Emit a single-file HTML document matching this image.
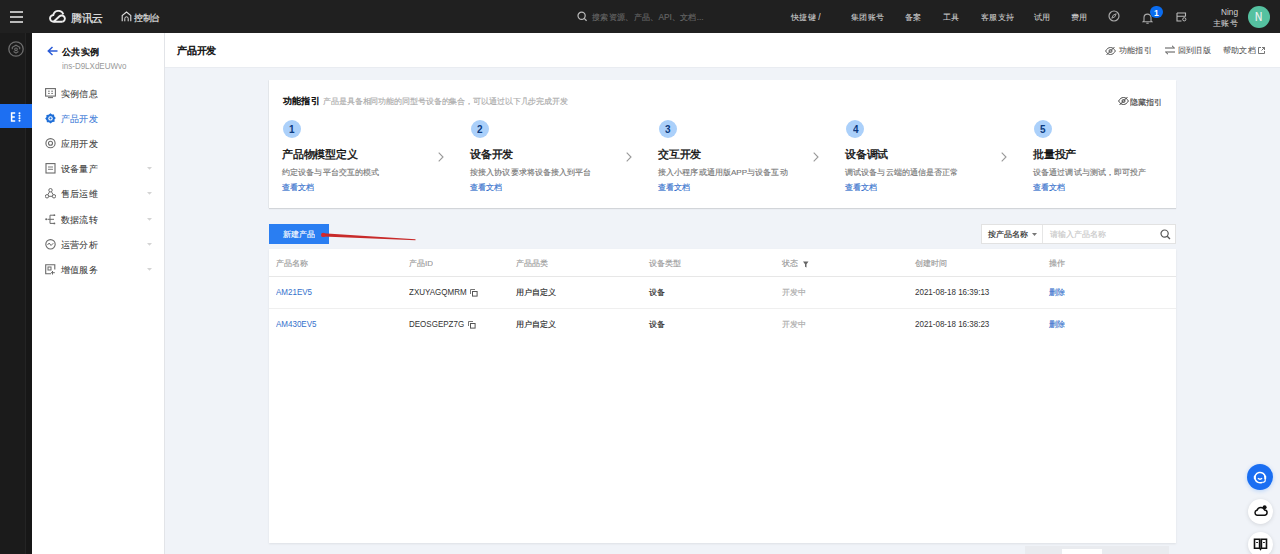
<!DOCTYPE html>
<html><head><meta charset="utf-8">
<style>
*{box-sizing:border-box;margin:0;padding:0}
html,body{width:1280px;height:554px;overflow:hidden}
body{font-family:"Liberation Sans",sans-serif;background:#f0f3f8;position:relative}
.abs{position:absolute}
.t{position:absolute;white-space:nowrap;line-height:20px;height:20px;font-size:20.0px;transform-origin:0 50%;-webkit-text-stroke:0.35px currentColor}
</style></head><body>
<div class="abs" style="left:0px;top:0px;width:1280px;height:33px;background:#202020"></div>
<div class="abs" style="left:0px;top:33px;width:32px;height:521px;background:#1b1b1b"></div>
<div class="abs" style="left:25px;top:33px;width:1px;height:521px;background:#242424"></div>
<div class="abs" style="left:26px;top:33px;width:6px;height:521px;background:#171717"></div>
<div class="abs" style="left:32px;top:33px;width:132px;height:521px;background:#fff"></div>
<div class="abs" style="left:164px;top:33px;width:1px;height:521px;background:#e2e4e8"></div>
<div class="abs" style="left:165px;top:33px;width:1115px;height:34px;background:#fff"></div>
<div class="abs" style="left:165px;top:67px;width:1115px;height:1px;background:#e9ecf1"></div>
<svg class="abs" style="left:10px;top:11px" width="14" height="12" viewBox="0 0 14 12"><g stroke="#eee" stroke-width="1.5"><line x1="0" y1="1" x2="13" y2="1"/><line x1="0" y1="6" x2="13" y2="6"/><line x1="0" y1="11" x2="13" y2="11"/></g></svg>
<svg class="abs" style="left:49px;top:10px" width="19" height="13" viewBox="0 0 19 13"><path d="M13.2 11.8H4.6A3.4 3.4 0 0 1 4.3 5A5.2 5.2 0 0 1 14.3 4.4" fill="none" stroke="#eee" stroke-width="1.9"/><path d="M4.6 11.8L10.5 6.3A3.2 3.2 0 1 1 13.2 11.8" fill="none" stroke="#eee" stroke-width="1.9"/></svg>
<span class="t" style="left:70.50px;top:7.50px;transform:scale(0.5250,0.5250);color:#eee;">腾讯云</span>
<svg class="abs" style="left:121px;top:11px" width="11" height="11" viewBox="0 0 11 11"><path d="M1.2 10.3V4.6L5.5 1L9.8 4.6V10.3" fill="none" stroke="#ddd" stroke-width="1.1"/><path d="M3.8 10.3V7.5A1.7 1.7 0 0 1 7.2 7.5V10.3" fill="none" stroke="#ddd" stroke-width="1"/></svg>
<span class="t" style="left:134.00px;top:7.50px;transform:scale(0.4250,0.4250);color:#e6e6e6;">控制台</span>
<svg class="abs" style="left:577px;top:11px" width="11" height="11" viewBox="0 0 11 11"><circle cx="4.6" cy="4.8" r="3.6" fill="none" stroke="#bbb" stroke-width="1.2"/><line x1="7.2" y1="7.4" x2="9.6" y2="9.8" stroke="#bbb" stroke-width="1.3"/></svg>
<span class="t" style="left:592.00px;top:7.00px;transform:scale(0.4150,0.4150);color:#666;">搜索资源、产品、API、文档...</span>
<span class="t" style="left:790.50px;top:7.00px;transform:scale(0.4150,0.4150);color:#d2d2d2;-webkit-text-stroke:0.15px currentColor;">快捷键 /</span>
<span class="t" style="left:851.40px;top:7.00px;transform:scale(0.4150,0.4150);color:#d2d2d2;-webkit-text-stroke:0.15px currentColor;">集团账号</span>
<span class="t" style="left:905.00px;top:7.00px;transform:scale(0.4150,0.4150);color:#d2d2d2;-webkit-text-stroke:0.15px currentColor;">备案</span>
<span class="t" style="left:943.00px;top:7.00px;transform:scale(0.4150,0.4150);color:#d2d2d2;-webkit-text-stroke:0.15px currentColor;">工具</span>
<span class="t" style="left:980.60px;top:7.00px;transform:scale(0.4150,0.4150);color:#d2d2d2;-webkit-text-stroke:0.15px currentColor;">客服支持</span>
<span class="t" style="left:1033.50px;top:7.00px;transform:scale(0.4150,0.4150);color:#d2d2d2;-webkit-text-stroke:0.15px currentColor;">试用</span>
<span class="t" style="left:1071.00px;top:7.00px;transform:scale(0.4150,0.4150);color:#d2d2d2;-webkit-text-stroke:0.15px currentColor;">费用</span>
<svg class="abs" style="left:1108px;top:10px" width="12" height="12" viewBox="0 0 12 12"><circle cx="6" cy="6" r="5" fill="none" stroke="#aaa" stroke-width="1.2"/><path d="M8.2 3.8L6.8 6.8L3.8 8.2L5.2 5.2Z" fill="none" stroke="#aaa" stroke-width="1"/></svg>
<svg class="abs" style="left:1142px;top:11.5px" width="11" height="12" viewBox="0 0 11 12"><path d="M2 8.8V5.6A3.5 3.5 0 0 1 9 5.6V8.8L10 9.8H1Z" fill="none" stroke="#aaa" stroke-width="1.1"/><path d="M4.3 11.2H6.7" stroke="#aaa" stroke-width="1.1"/></svg>
<div class="abs" style="left:1150px;top:5.7px;width:12.6px;height:12.6px;border-radius:50%;background:#0a6cf0"></div>
<span class="t" style="left:1154.00px;top:2.80px;transform:scale(0.4250,0.4250);color:#fff;font-weight:bold;-webkit-text-stroke:0;">1</span>
<svg class="abs" style="left:1176px;top:12px" width="11" height="10" viewBox="0 0 11 10"><path d="M1 1H9.5V4.5M1 1V9H5.5M1 4.2H9.5" fill="none" stroke="#bbb" stroke-width="1.1"/><circle cx="8.3" cy="7.3" r="1.6" fill="none" stroke="#bbb" stroke-width="1"/></svg>
<span class="t" style="left:1221.00px;top:2.20px;transform:scale(0.4150,0.4980);color:#d2d2d2;-webkit-text-stroke:0;">Ning</span>
<span class="t" style="left:1212.50px;top:12.50px;transform:scale(0.4150,0.4150);color:#d2d2d2;-webkit-text-stroke:0.15px currentColor;">主账号</span>
<div class="abs" style="left:1247.6px;top:5.5px;width:22px;height:22px;border-radius:50%;background:#55c1a0"></div>
<span class="t" style="left:1255.00px;top:6.80px;transform:scale(0.5000,0.6000);color:#f4f4f4;-webkit-text-stroke:0.3px currentColor;">N</span>
<svg class="abs" style="left:8px;top:41px" width="16" height="16" viewBox="0 0 16 16"><circle cx="8" cy="8" r="7.2" fill="none" stroke="#6e6e6e" stroke-width="1.3"/><path d="M4.3 8.2V6.3L8 4.2L11.7 6.3V8.2" fill="none" stroke="#6e6e6e" stroke-width="1.2"/><path d="M5.6 10.5L8 12.2L10.4 10.5" fill="none" stroke="#6e6e6e" stroke-width="1.1"/><circle cx="8" cy="8.3" r="1.3" fill="none" stroke="#6e6e6e" stroke-width="1.1"/></svg>
<div class="abs" style="left:0px;top:104px;width:32px;height:24px;background:#1d6ff2"></div>
<svg class="abs" style="left:10px;top:112px" width="12" height="10" viewBox="0 0 12 10"><g stroke="#fff" stroke-width="1.5" fill="none"><path d="M5.2 1H1.6V9H5.2M1.6 5H4.8"/></g><circle cx="9.5" cy="1.3" r="1" fill="#fff"/><circle cx="9.5" cy="3.8" r="1" fill="#fff"/><circle cx="9.5" cy="6.3" r="1" fill="#fff"/><circle cx="9.5" cy="8.8" r="1" fill="#fff"/></svg>
<svg class="abs" style="left:47px;top:46px" width="11" height="10" viewBox="0 0 11 10"><path d="M10.5 5H1.5M5.5 1L1.3 5L5.5 9" fill="none" stroke="#2a5bd7" stroke-width="1.5"/></svg>
<span class="t" style="left:62.00px;top:41.80px;transform:scale(0.4650,0.4650);color:#111;-webkit-text-stroke:1.0px currentColor;">公共实例</span>
<span class="t" style="left:62.00px;top:55.80px;transform:scale(0.4000,0.4800);color:#999;-webkit-text-stroke:0;">ins-D9LXdEUWvo</span>
<svg class="abs" style="left:45px;top:87.7px" width="11" height="11" viewBox="0 0 11 11"><rect x="0.6" y="0.6" width="9.8" height="7.5" fill="none" stroke="#6a6a6a" stroke-width="1.1"/><path d="M3 9.6H8" stroke="#6a6a6a" stroke-width="1.1"/><path d="M3 3.2H4.8M6.2 3.2H8M3 5.4H4.8M6.2 5.4H8" stroke="#6a6a6a" stroke-width="0.9"/></svg>
<span class="t" style="left:61.40px;top:83.70px;transform:scale(0.4600,0.4600);color:#3a3a3a;-webkit-text-stroke:0.15px currentColor;">实例信息</span>
<svg class="abs" style="left:45px;top:112.5px" width="11" height="11" viewBox="0 0 11 11"><path d="M5.5 0.3L7 1.6L9 1.5L9.3 3.5L10.8 5L9.5 6.6L9.6 8.7L7.5 9L5.5 10.5L4 9.2L1.9 9.3L1.6 7.3L0.2 5.6L1.5 4.1L1.4 2L3.5 1.7Z" fill="#1f6fd8"/><circle cx="5.5" cy="5.4" r="2.2" fill="#fff"/><circle cx="5.5" cy="5.4" r="1.1" fill="#1f6fd8"/></svg>
<span class="t" style="left:61.40px;top:108.50px;transform:scale(0.4600,0.4600);color:#3d7bd8;-webkit-text-stroke:0.15px currentColor;">产品开发</span>
<svg class="abs" style="left:45px;top:137.5px" width="11" height="11" viewBox="0 0 11 11"><circle cx="5.5" cy="5.2" r="4.6" fill="none" stroke="#6a6a6a" stroke-width="1.1"/><circle cx="5.5" cy="5.2" r="2" fill="none" stroke="#6a6a6a" stroke-width="1.1"/></svg>
<span class="t" style="left:61.40px;top:133.50px;transform:scale(0.4600,0.4600);color:#3a3a3a;-webkit-text-stroke:0.15px currentColor;">应用开发</span>
<svg class="abs" style="left:45px;top:163.0px" width="11" height="11" viewBox="0 0 11 11"><rect x="1" y="0.6" width="9" height="9.4" fill="none" stroke="#6a6a6a" stroke-width="1.1"/><path d="M3 4H8M3 6.3H8" stroke="#6a6a6a" stroke-width="0.9"/></svg>
<span class="t" style="left:61.40px;top:159.00px;transform:scale(0.4600,0.4600);color:#3a3a3a;-webkit-text-stroke:0.15px currentColor;">设备量产</span>
<svg class="abs" style="left:147px;top:167.0px" width="5" height="3" viewBox="0 0 5 3"><path d="M0 0H5L2.5 2.8Z" fill="#d4d4d4"/></svg>
<svg class="abs" style="left:45px;top:188.3px" width="11" height="11" viewBox="0 0 11 11"><circle cx="5.5" cy="2.2" r="1.7" fill="none" stroke="#6a6a6a" stroke-width="1"/><circle cx="2" cy="8.3" r="1.7" fill="none" stroke="#6a6a6a" stroke-width="1"/><circle cx="9" cy="8.3" r="1.7" fill="none" stroke="#6a6a6a" stroke-width="1"/><path d="M4.6 3.7L2.8 6.8M6.4 3.7L8.2 6.8M3.7 8.3H7.3" stroke="#6a6a6a" stroke-width="1"/></svg>
<span class="t" style="left:61.40px;top:184.30px;transform:scale(0.4600,0.4600);color:#3a3a3a;-webkit-text-stroke:0.15px currentColor;">售后运维</span>
<svg class="abs" style="left:147px;top:192.3px" width="5" height="3" viewBox="0 0 5 3"><path d="M0 0H5L2.5 2.8Z" fill="#d4d4d4"/></svg>
<svg class="abs" style="left:45px;top:214.1px" width="11" height="11" viewBox="0 0 11 11"><circle cx="1.2" cy="5.3" r="1" fill="#6a6a6a"/><path d="M2.5 5.3H5M5 1.2V9.4M5 1.2H9M5 5.3H9M5 9.4H9" fill="none" stroke="#6a6a6a" stroke-width="1"/><circle cx="9.4" cy="1.2" r="0.9" fill="#6a6a6a"/><circle cx="9.4" cy="9.4" r="0.9" fill="#6a6a6a"/></svg>
<span class="t" style="left:61.40px;top:210.10px;transform:scale(0.4600,0.4600);color:#3a3a3a;-webkit-text-stroke:0.15px currentColor;">数据流转</span>
<svg class="abs" style="left:147px;top:218.1px" width="5" height="3" viewBox="0 0 5 3"><path d="M0 0H5L2.5 2.8Z" fill="#d4d4d4"/></svg>
<svg class="abs" style="left:45px;top:239.0px" width="11" height="11" viewBox="0 0 11 11"><circle cx="5.5" cy="5.3" r="4.7" fill="none" stroke="#6a6a6a" stroke-width="1.1"/><path d="M2.5 6L4.2 4L6 6.5L8.3 4.2" fill="none" stroke="#6a6a6a" stroke-width="1"/></svg>
<span class="t" style="left:61.40px;top:235.00px;transform:scale(0.4600,0.4600);color:#3a3a3a;-webkit-text-stroke:0.15px currentColor;">运营分析</span>
<svg class="abs" style="left:147px;top:243.0px" width="5" height="3" viewBox="0 0 5 3"><path d="M0 0H5L2.5 2.8Z" fill="#d4d4d4"/></svg>
<svg class="abs" style="left:45px;top:264.1px" width="11" height="11" viewBox="0 0 11 11"><path d="M6 9.8H0.7V0.7H9.8V5.5" fill="none" stroke="#6a6a6a" stroke-width="1.1"/><rect x="3" y="3" width="3" height="3" fill="none" stroke="#6a6a6a" stroke-width="1"/><path d="M7.5 7V10.5M6 8.7H9.8" stroke="#6a6a6a" stroke-width="1"/></svg>
<span class="t" style="left:61.40px;top:260.10px;transform:scale(0.4600,0.4600);color:#3a3a3a;-webkit-text-stroke:0.15px currentColor;">增值服务</span>
<svg class="abs" style="left:147px;top:268.1px" width="5" height="3" viewBox="0 0 5 3"><path d="M0 0H5L2.5 2.8Z" fill="#d4d4d4"/></svg>
<span class="t" style="left:177.00px;top:40.50px;transform:scale(0.4900,0.4900);color:#111;-webkit-text-stroke:1.0px currentColor;">产品开发</span>
<svg class="abs" style="left:1105px;top:45.5px" width="11" height="10" viewBox="0 0 11 10"><path d="M0.6 5C2 2.6 3.6 1.5 5.5 1.5S9 2.6 10.4 5C9 7.4 7.4 8.5 5.5 8.5S2 7.4 0.6 5Z" fill="none" stroke="#555" stroke-width="1"/><circle cx="5.5" cy="5" r="1.5" fill="none" stroke="#555" stroke-width="1"/><path d="M1.5 9L9.5 1" stroke="#555" stroke-width="1"/></svg>
<span class="t" style="left:1118.50px;top:40.30px;transform:scale(0.4100,0.4100);color:#555;-webkit-text-stroke:0.2px currentColor;">功能指引</span>
<svg class="abs" style="left:1164px;top:45px" width="12" height="10" viewBox="0 0 12 10"><path d="M1 3H10.5M8 0.8L10.5 3M11 7H1.5M4 9.2L1.5 7" fill="none" stroke="#555" stroke-width="1"/></svg>
<span class="t" style="left:1177.60px;top:40.30px;transform:scale(0.4100,0.4100);color:#555;-webkit-text-stroke:0.2px currentColor;">回到旧版</span>
<span class="t" style="left:1222.50px;top:40.30px;transform:scale(0.4100,0.4100);color:#555;-webkit-text-stroke:0.2px currentColor;">帮助文档</span>
<svg class="abs" style="left:1258px;top:46.5px" width="7" height="7" viewBox="0 0 7 7"><path d="M3 0.5H0.5V6.5H6.5V4M4 0.5H6.5V3M6.5 0.5L3.5 3.5" fill="none" stroke="#666" stroke-width="0.9"/></svg>
<div class="abs" style="left:269px;top:80px;width:907px;height:128px;background:#fff;box-shadow:0 1px 1px rgba(0,0,0,.12),-1px 0 0 #e8ebef"></div>
<span class="t" style="left:282.50px;top:91.00px;transform:scale(0.4600,0.4600);color:#111;-webkit-text-stroke:1.0px currentColor;">功能指引</span>
<span class="t" style="left:323.00px;top:91.00px;transform:scale(0.3950,0.3950);color:#aaa;">产品是具备相同功能的同型号设备的集合，可以通过以下几步完成开发</span>
<svg class="abs" style="left:1118px;top:96px" width="11" height="10" viewBox="0 0 11 10"><path d="M0.6 5C2 2.6 3.6 1.5 5.5 1.5S9 2.6 10.4 5C9 7.4 7.4 8.5 5.5 8.5S2 7.4 0.6 5Z" fill="none" stroke="#444" stroke-width="1"/><circle cx="5.5" cy="5" r="1.5" fill="none" stroke="#444" stroke-width="1"/><path d="M1.5 9L9.5 1" stroke="#444" stroke-width="1"/></svg>
<span class="t" style="left:1130.00px;top:91.50px;transform:scale(0.4000,0.4000);color:#444;">隐藏指引</span>
<div class="abs" style="left:283.0px;top:119.8px;width:18px;height:18px;border-radius:50%;background:#abd0fa"></div>
<span class="t" style="left:289.30px;top:119.30px;transform:scale(0.5000,0.5750);color:#0c3a80;font-weight:bold;-webkit-text-stroke:0;">1</span>
<span class="t" style="left:282.00px;top:144.30px;transform:scale(0.5400,0.5400);color:#111;-webkit-text-stroke:0.7px currentColor;">产品物模型定义</span>
<span class="t" style="left:282.00px;top:161.90px;transform:scale(0.4050,0.4050);color:#777;">约定设备与平台交互的模式</span>
<span class="t" style="left:282.00px;top:177.30px;transform:scale(0.4050,0.4050);color:#3470cc;">查看文档</span>
<svg class="abs" style="left:438.0px;top:152px" width="6" height="10" viewBox="0 0 6 10"><path d="M0.7 0.7L5 5L0.7 9.3" fill="none" stroke="#999" stroke-width="1.1"/></svg>
<div class="abs" style="left:470.75px;top:119.8px;width:18px;height:18px;border-radius:50%;background:#abd0fa"></div>
<span class="t" style="left:477.05px;top:119.30px;transform:scale(0.5000,0.5750);color:#0c3a80;font-weight:bold;-webkit-text-stroke:0;">2</span>
<span class="t" style="left:469.75px;top:144.30px;transform:scale(0.5400,0.5400);color:#111;-webkit-text-stroke:0.7px currentColor;">设备开发</span>
<span class="t" style="left:469.75px;top:161.90px;transform:scale(0.4050,0.4050);color:#777;">按接入协议要求将设备接入到平台</span>
<span class="t" style="left:469.75px;top:177.30px;transform:scale(0.4050,0.4050);color:#3470cc;">查看文档</span>
<svg class="abs" style="left:625.5px;top:152px" width="6" height="10" viewBox="0 0 6 10"><path d="M0.7 0.7L5 5L0.7 9.3" fill="none" stroke="#999" stroke-width="1.1"/></svg>
<div class="abs" style="left:658.5px;top:119.8px;width:18px;height:18px;border-radius:50%;background:#abd0fa"></div>
<span class="t" style="left:664.80px;top:119.30px;transform:scale(0.5000,0.5750);color:#0c3a80;font-weight:bold;-webkit-text-stroke:0;">3</span>
<span class="t" style="left:657.50px;top:144.30px;transform:scale(0.5400,0.5400);color:#111;-webkit-text-stroke:0.7px currentColor;">交互开发</span>
<span class="t" style="left:657.50px;top:161.90px;transform:scale(0.4050,0.4050);color:#777;">接入小程序或通用版APP与设备互动</span>
<span class="t" style="left:657.50px;top:177.30px;transform:scale(0.4050,0.4050);color:#3470cc;">查看文档</span>
<svg class="abs" style="left:813.0px;top:152px" width="6" height="10" viewBox="0 0 6 10"><path d="M0.7 0.7L5 5L0.7 9.3" fill="none" stroke="#999" stroke-width="1.1"/></svg>
<div class="abs" style="left:846.25px;top:119.8px;width:18px;height:18px;border-radius:50%;background:#abd0fa"></div>
<span class="t" style="left:852.55px;top:119.30px;transform:scale(0.5000,0.5750);color:#0c3a80;font-weight:bold;-webkit-text-stroke:0;">4</span>
<span class="t" style="left:845.25px;top:144.30px;transform:scale(0.5400,0.5400);color:#111;-webkit-text-stroke:0.7px currentColor;">设备调试</span>
<span class="t" style="left:845.25px;top:161.90px;transform:scale(0.4050,0.4050);color:#777;">调试设备与云端的通信是否正常</span>
<span class="t" style="left:845.25px;top:177.30px;transform:scale(0.4050,0.4050);color:#3470cc;">查看文档</span>
<svg class="abs" style="left:1000.5px;top:152px" width="6" height="10" viewBox="0 0 6 10"><path d="M0.7 0.7L5 5L0.7 9.3" fill="none" stroke="#999" stroke-width="1.1"/></svg>
<div class="abs" style="left:1034.0px;top:119.8px;width:18px;height:18px;border-radius:50%;background:#abd0fa"></div>
<span class="t" style="left:1040.30px;top:119.30px;transform:scale(0.5000,0.5750);color:#0c3a80;font-weight:bold;-webkit-text-stroke:0;">5</span>
<span class="t" style="left:1033.00px;top:144.30px;transform:scale(0.5400,0.5400);color:#111;-webkit-text-stroke:0.7px currentColor;">批量投产</span>
<span class="t" style="left:1033.00px;top:161.90px;transform:scale(0.4050,0.4050);color:#777;">设备通过调试与测试，即可投产</span>
<span class="t" style="left:1033.00px;top:177.30px;transform:scale(0.4050,0.4050);color:#3470cc;">查看文档</span>
<div class="abs" style="left:269px;top:224px;width:60px;height:20px;background:#2a7ef2"></div>
<span class="t" style="left:283.40px;top:224.00px;transform:scale(0.4000,0.4000);color:#fff;">新建产品</span>
<svg class="abs" style="left:318px;top:229px" width="100" height="14" viewBox="0 0 100 14"><path d="M5.2 4.2L97.5 10.3L97.5 11.3L5.2 7.6Z" fill="#c82a2a"/><circle cx="5.2" cy="5.9" r="2.2" fill="#d8262c"/></svg>
<div class="abs" style="left:981px;top:224px;width:195px;height:20px;background:#fff;border:1px solid #e2e2e2"></div>
<div class="abs" style="left:1042px;top:225px;width:1px;height:18px;background:#e6e6e6"></div>
<span class="t" style="left:987.80px;top:223.70px;transform:scale(0.4000,0.4000);color:#222;">按产品名称</span>
<svg class="abs" style="left:1032px;top:232.5px" width="6" height="4" viewBox="0 0 6 4"><path d="M0 0H5L2.5 3Z" fill="#777"/></svg>
<span class="t" style="left:1050.30px;top:223.70px;transform:scale(0.4000,0.4000);color:#c8c8c8;">请输入产品名称</span>
<svg class="abs" style="left:1160px;top:229px" width="11" height="11" viewBox="0 0 11 11"><circle cx="4.6" cy="4.6" r="3.6" fill="none" stroke="#555" stroke-width="1.2"/><line x1="7.2" y1="7.2" x2="10" y2="10" stroke="#555" stroke-width="1.3"/></svg>
<div class="abs" style="left:269px;top:249px;width:907px;height:294px;background:#fff;box-shadow:0 1px 2px rgba(0,0,0,.08)"></div>
<div class="abs" style="left:269px;top:276px;width:907px;height:1px;background:#e7e7e7"></div>
<div class="abs" style="left:269px;top:307.5px;width:907px;height:1.5px;background:#efefef"></div>
<span class="t" style="left:275.80px;top:253.00px;transform:scale(0.4000,0.4000);color:#999;">产品名称</span>
<span class="t" style="left:409.20px;top:253.00px;transform:scale(0.4000,0.4000);color:#999;">产品ID</span>
<span class="t" style="left:515.50px;top:253.00px;transform:scale(0.4000,0.4000);color:#999;">产品品类</span>
<span class="t" style="left:649.40px;top:253.00px;transform:scale(0.4000,0.4000);color:#999;">设备类型</span>
<span class="t" style="left:782.10px;top:253.00px;transform:scale(0.4000,0.4000);color:#999;">状态</span>
<span class="t" style="left:915.30px;top:253.00px;transform:scale(0.4000,0.4000);color:#999;">创建时间</span>
<span class="t" style="left:1048.50px;top:253.00px;transform:scale(0.4000,0.4000);color:#999;">操作</span>
<svg class="abs" style="left:802.5px;top:260.5px" width="6" height="7" viewBox="0 0 6 7"><path d="M0 0.5H5.5L3.5 3.3V6.5L2 5.8V3.3Z" fill="#666"/></svg>
<span class="t" style="left:275.80px;top:282.30px;transform:scale(0.4000,0.4800);color:#3470cc;-webkit-text-stroke:0;">AM21EV5</span>
<span class="t" style="left:409.20px;top:282.30px;transform:scale(0.4000,0.4800);color:#333;-webkit-text-stroke:0;">ZXUYAGQMRM</span>
<svg class="abs" style="left:470.4px;top:289.0px" width="8" height="8" viewBox="0 0 8 8"><path d="M0.5 5V0.5H5" fill="none" stroke="#666" stroke-width="0.9"/><rect x="2.5" y="2.5" width="4.6" height="4.6" fill="none" stroke="#555" stroke-width="1"/></svg>
<span class="t" style="left:515.50px;top:282.30px;transform:scale(0.4000,0.4000);color:#222;">用户自定义</span>
<span class="t" style="left:649.40px;top:282.30px;transform:scale(0.4000,0.4000);color:#222;">设备</span>
<span class="t" style="left:782.10px;top:282.30px;transform:scale(0.4000,0.4000);color:#aaa;">开发中</span>
<span class="t" style="left:915.30px;top:282.30px;transform:scale(0.4000,0.4800);color:#333;-webkit-text-stroke:0;">2021-08-18 16:39:13</span>
<span class="t" style="left:1048.50px;top:282.30px;transform:scale(0.4000,0.4000);color:#3470cc;">删除</span>
<span class="t" style="left:275.80px;top:314.00px;transform:scale(0.4000,0.4800);color:#3470cc;-webkit-text-stroke:0;">AM430EV5</span>
<span class="t" style="left:409.20px;top:314.00px;transform:scale(0.4000,0.4800);color:#333;-webkit-text-stroke:0;">DEOSGEPZ7G</span>
<svg class="abs" style="left:467.8px;top:320.7px" width="8" height="8" viewBox="0 0 8 8"><path d="M0.5 5V0.5H5" fill="none" stroke="#666" stroke-width="0.9"/><rect x="2.5" y="2.5" width="4.6" height="4.6" fill="none" stroke="#555" stroke-width="1"/></svg>
<span class="t" style="left:515.50px;top:314.00px;transform:scale(0.4000,0.4000);color:#222;">用户自定义</span>
<span class="t" style="left:649.40px;top:314.00px;transform:scale(0.4000,0.4000);color:#222;">设备</span>
<span class="t" style="left:782.10px;top:314.00px;transform:scale(0.4000,0.4000);color:#aaa;">开发中</span>
<span class="t" style="left:915.30px;top:314.00px;transform:scale(0.4000,0.4800);color:#333;-webkit-text-stroke:0;">2021-08-18 16:38:23</span>
<span class="t" style="left:1048.50px;top:314.00px;transform:scale(0.4000,0.4000);color:#3470cc;">删除</span>
<div class="abs" style="left:1025px;top:546px;width:144px;height:10px;background:#e9ebef"></div>
<div class="abs" style="left:1062px;top:549px;width:40px;height:8px;background:#fff"></div>
<div class="abs" style="left:1247px;top:464.3px;width:26px;height:26px;border-radius:50%;background:#1a6ef2;box-shadow:0 1px 4px rgba(0,110,255,.25)"></div>
<svg class="abs" style="left:1253px;top:470px" width="14" height="15" viewBox="0 0 14 15"><path d="M9.3 12.3A5.2 5.2 0 1 1 12.2 7.2" fill="none" stroke="#fff" stroke-width="1.5"/><rect x="0.8" y="5.6" width="2" height="3.6" rx="0.8" fill="#fff"/><rect x="11.2" y="5.6" width="2" height="3.6" rx="0.8" fill="#fff"/><path d="M4.9 8.3Q7 10.2 9.1 8.3" fill="none" stroke="#fff" stroke-width="1.3"/><path d="M12.2 9V10.5Q12.2 12.3 9.3 12.3" fill="none" stroke="#fff" stroke-width="1.2"/></svg>
<div class="abs" style="left:1247.5px;top:498.5px;width:25px;height:25px;border-radius:50%;background:#fff;box-shadow:0 1px 4px rgba(0,0,0,.12)"></div>
<svg class="abs" style="left:1253px;top:504px" width="15" height="13" viewBox="0 0 15 13"><path d="M4 11.2H11.3A2.6 2.6 0 0 0 11.6 6A4 4 0 0 0 4 6.3A2.5 2.5 0 0 0 4 11.2Z" fill="none" stroke="#111" stroke-width="1.5"/><circle cx="11.6" cy="3.2" r="2" fill="#111"/></svg>
<div class="abs" style="left:1247.5px;top:531.5px;width:25px;height:25px;border-radius:50%;background:#fff;box-shadow:0 1px 4px rgba(0,0,0,.12)"></div>
<svg class="abs" style="left:1253px;top:537px" width="15" height="14" viewBox="0 0 15 14"><path d="M1.5 2.2H6.6V11.2H1.5ZM8.4 2.2H13.5V11.2H8.4Z" fill="none" stroke="#111" stroke-width="1.6"/><path d="M6.6 11.2L7.5 12.6L8.4 11.2" fill="none" stroke="#111" stroke-width="1.2"/><path d="M3.2 5.5H4.9M10.1 5.5H11.8" stroke="#111" stroke-width="1"/></svg>
</body></html>
